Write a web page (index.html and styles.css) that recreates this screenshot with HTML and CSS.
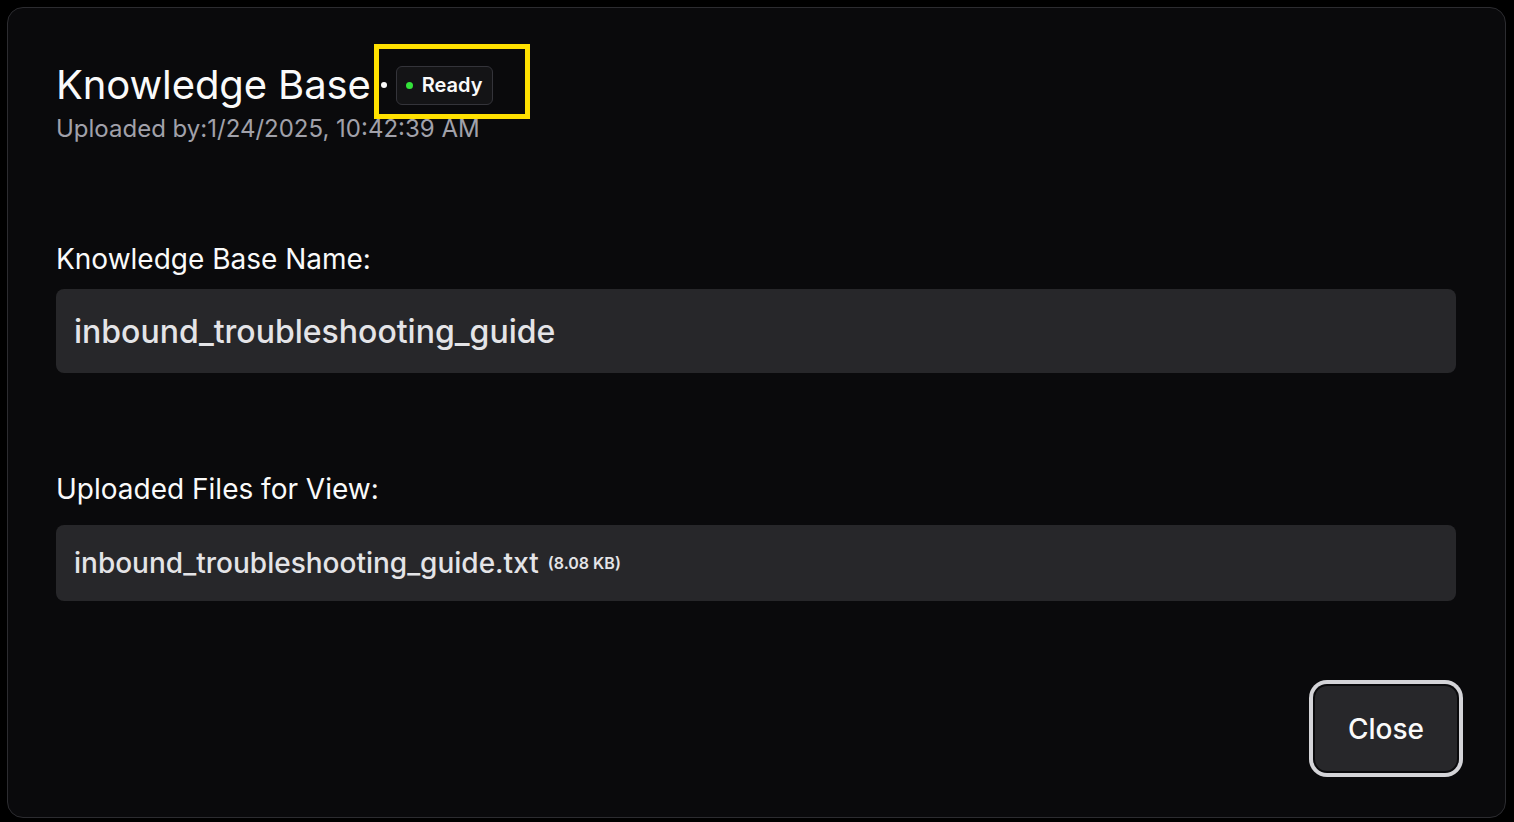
FILE: index.html
```html
<!DOCTYPE html>
<html lang="en">
<head>
<meta charset="utf-8">
<title>Knowledge Base</title>
<link rel="stylesheet" href="styles.css">
</head>
<body>
<div class="page">
  <div class="modal">
    <header class="head">
      <div class="title-row">
        <h2 class="title">Knowledge Base</h2>
        <span class="sep"></span>
        <span class="badge-wrap">
          <span class="badge"><i class="dot"></i>Ready</span>
        </span>
      </div>
      <p class="sub">Uploaded by:1/24/2025, 10:42:39 AM</p>
    </header>

    <section class="field field-name">
      <label class="label">Knowledge Base Name:</label>
      <div class="box box-name">inbound_troubleshooting_guide</div>
    </section>

    <section class="field field-files">
      <label class="label">Uploaded Files for View:</label>
      <div class="box box-file"><span class="fname">inbound_troubleshooting_guide.txt</span><span class="fsize">(8.08 KB)</span></div>
    </section>

    <footer class="foot">
      <button class="close">Close</button>
    </footer>
  </div>
</div>
</body>
</html>
```

FILE: styles.css
```css
* { box-sizing: border-box; }
html, body { margin: 0; padding: 0; background: #000; }
body { font-family: Inter, "Noto Sans", "Liberation Sans", sans-serif; color: #fafafa; }

.page { padding: 7px 8px 4px 7px; }

.modal {
  width: 1499px;
  height: 811px;
  background: #0a0a0c;
  border: 1px solid #2c2c30;
  border-radius: 16px;
  padding: 50px 50px 0 48px;
  display: flex;
  flex-direction: column;
}

.head { display: flex; flex-direction: column; }
.title-row { display: flex; align-items: center; height: 48px; margin-top: 3px; }
.title { margin: 0; font-size: 40px; font-weight: 400; line-height: 48px; color: #fafafa; letter-spacing: -0.1px; }
.sep { width: 6px; height: 6px; border-radius: 50%; background: #fafafa; margin: 0 9px 0 10px; }
.badge-wrap { position: relative; display: inline-flex; }
.badge-wrap::after {
  content: "";
  position: absolute;
  left: -22px; top: -22px; right: -37px; bottom: -14px;
  border: 5px solid #ffe100;
  pointer-events: none;
}
.badge {
  display: inline-flex; align-items: center; gap: 9px;
  height: 39px; padding: 0 9px 0 9px;
  background: #141416; border: 1px solid #34343a; border-radius: 6px;
  font-size: 20px; font-weight: 600; color: #fafafa;
}
.dot { width: 7px; height: 7px; border-radius: 50%; background: #33e33a; display: inline-block; }
.sub { margin: 5px 0 0; font-size: 24px; line-height: 30px; color: #a1a1aa; }

.field { display: flex; flex-direction: column; }
.field-name { margin-top: 98px; }
.field-files { margin-top: 99px; }
.label { font-size: 28px; line-height: 34px; color: #fafafa; }
.field-name .label { margin-bottom: 13px; }
.field-files .label { margin-bottom: 19px; }

.box {
  background: #27272a; border-radius: 8px;
  display: flex; align-items: center;
  padding: 0 18px; color: #e4e4e7; width: 1400px;
}
.box-name { height: 84px; font-size: 32px; font-weight: 500; }
.box-file { height: 76px; gap: 9px; }
.fname { font-size: 28px; font-weight: 500; }
.fsize { font-size: 16px; font-weight: 600; color: #e4e4e7; }

.foot { display: flex; justify-content: flex-end; margin-top: 85px; margin-right: -2px; }
.close {
  width: 142px; height: 85px;
  background: #27272a; color: #fafafa;
  border: none; border-radius: 12px;
  font-family: inherit; font-size: 28px; font-weight: 500;
  box-shadow: 0 0 0 2px #0a0a0c, 0 0 0 6px #d4d4d8;
}
```
